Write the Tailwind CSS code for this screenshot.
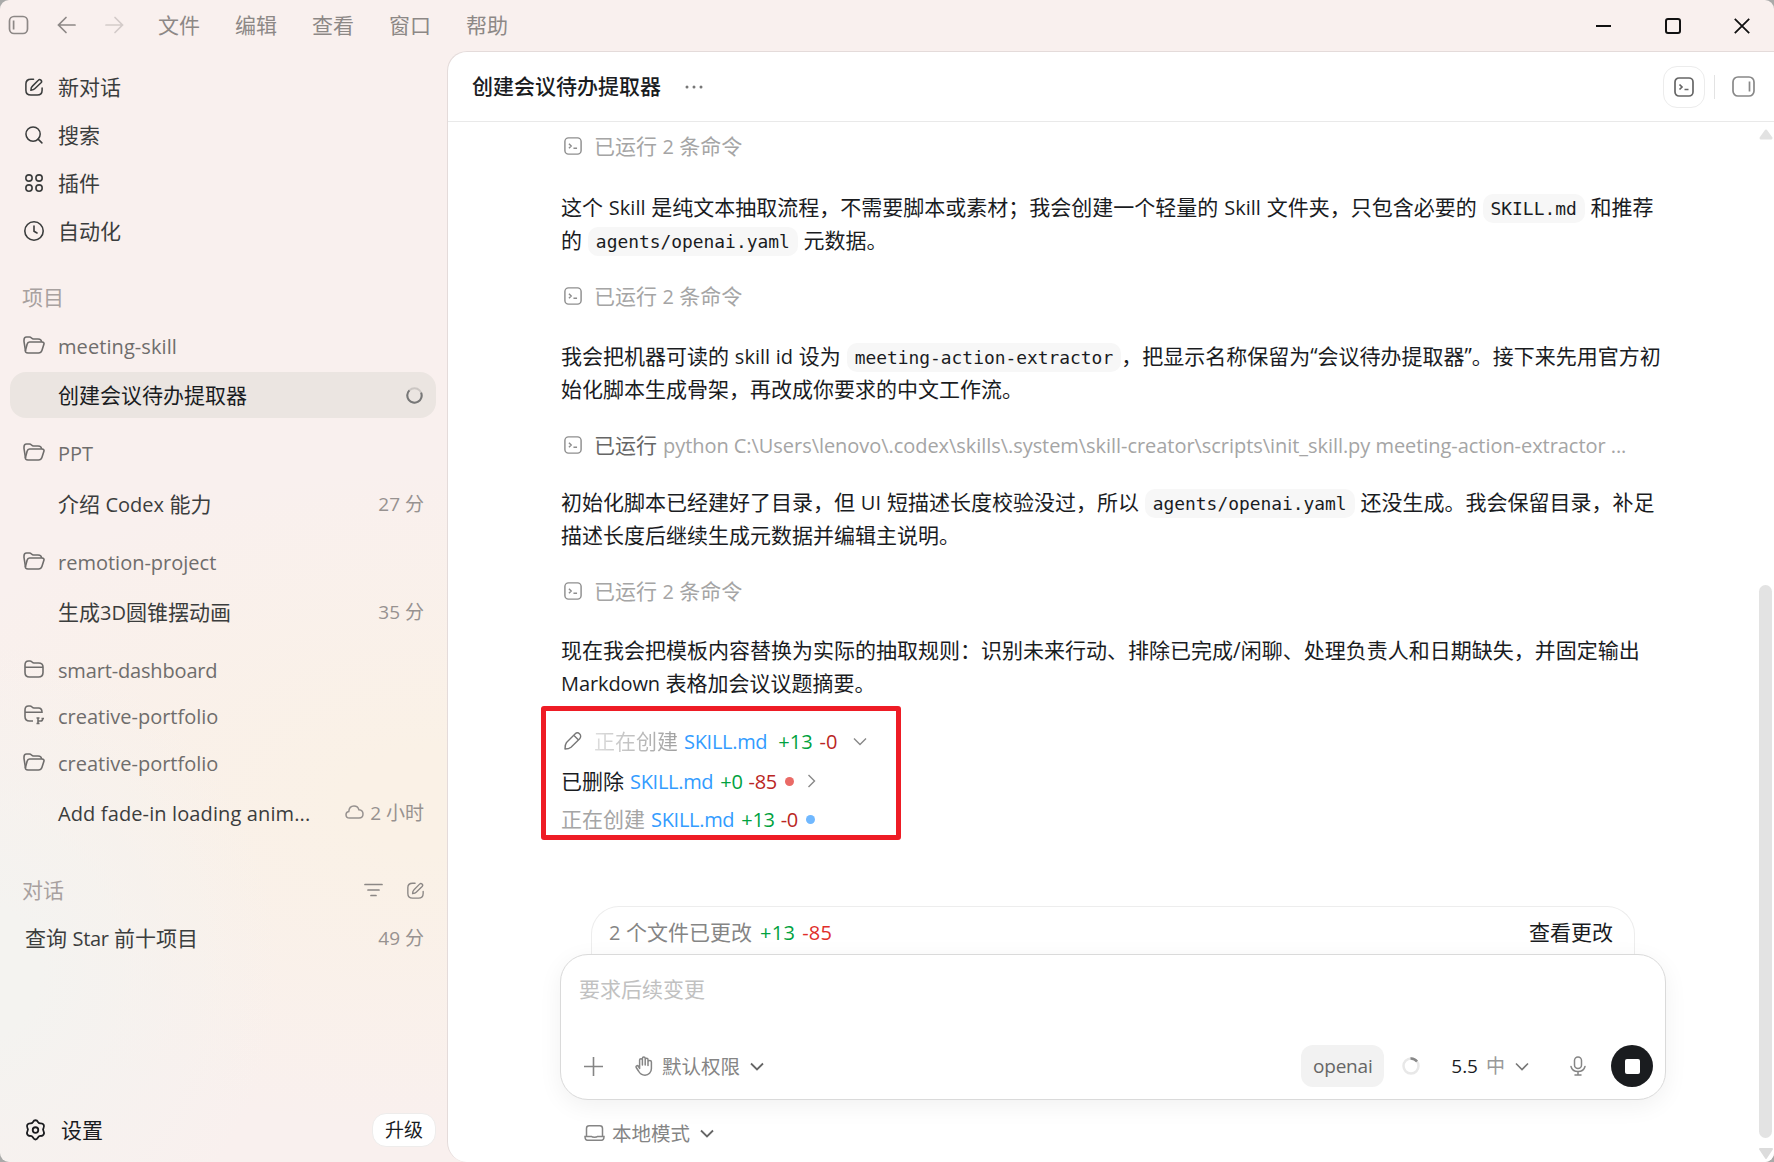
<!DOCTYPE html>
<html lang="zh-CN">
<head>
  <meta charset="UTF-8">
  <meta name="viewport" content="width=device-width, initial-scale=1.0">
  <title>创建会议待办提取器</title>
  <script src="https://cdn.jsdelivr.net/npm/@tailwindcss/browser@4"></script>
</head>
<body class="h-screen overflow-hidden bg-[#a9aaa9] font-['Open_Sans','Noto_Sans_CJK_SC',sans-serif] text-[21px] leading-[33px] text-[#1a1c1f]">

  <!-- Icon sprite -->
  <svg class="hidden">
    <symbol id="compose" viewBox="0 0 20 20"><path d="M9.500 1.500H6.600C3 1.500 1 3.400 1 6.600v7C1 17 3 19 6.600 19h7c3.400 0 5.400-2 5.400-5.400V11" stroke-linecap="round"/><path d="M8 9.300l6.800-6.800a2 2 0 0 1 3 2.800L10.800 12c-.7.700-2 1.200-4.200 1.500 0-1.900.5-3.400 1.400-4.200z"/></symbol>
    <symbol id="terminal" viewBox="0 0 20 20"><rect x="1" y="1" width="18" height="18" rx="4"/><path d="M5.500 7.500L8 10l-2.500 2.500M10.500 12.500h4"/></symbol>
    <symbol id="folder-open" viewBox="0 0 22 18"><path d="M2.500 15L1 5.500V4c0-2 1-3 2.500-3h3c2 0 2 2 4 2H15c2.500 0 3.500 1 3.500 3"/><path d="M6.500 6H19c1.700 0 2.300 1 1.900 2.300l-2 6.200c-.6 1.800-1.500 2.500-3.400 2.500H5c-2 0-3-1-2.500-2.800l1.600-6C4.500 6.700 5.200 6 6.500 6z"/></symbol>
    <symbol id="folder" viewBox="0 0 20 18"><path d="M1 5c0-2.800 1.200-4 3.500-4H6c2 0 2 2 4 2h4.500C17.500 3 19 4.300 19 7v5.500c0 3-1.500 4.500-4.500 4.500h-9C2.500 17 1 15.500 1 12.500zM1 7.300h18"/></symbol>
    <symbol id="down" viewBox="0 0 14 9"><path d="M1 1.500l6 6 6-6"/></symbol>
  </svg>

  <div class="flex h-full flex-col overflow-hidden rounded-[9px] bg-[#f9f0ee] bg-[radial-gradient(ellipse_300px_330px_at_-20px_970px,#f4f3f0_20%,transparent),radial-gradient(ellipse_560px_330px_at_433px_800px,#faf1e6_15%,transparent)]">

    <!-- Title bar -->
    <header class="flex h-[51px] shrink-0 items-center text-[#8d8886]">
      <svg class="ml-2 size-[22px]" viewBox="0 0 22 22" fill="none" stroke="currentColor" stroke-width="1.700"><rect x="1.500" y="1.500" width="18" height="17" rx="4.500"/><path d="M5.600 5.500v9"/></svg>
      <svg class="ml-[27px] size-[19px]" viewBox="0 0 19 19" fill="none" stroke="currentColor" stroke-width="1.700" stroke-linecap="round"><path d="M18 9H1.500M9 1.500L1.500 9 9 16.500"/></svg>
      <svg class="ml-[29px] size-[19px] text-[#d3cbc9]" viewBox="0 0 19 19" fill="none" stroke="currentColor" stroke-width="1.700" stroke-linecap="round"><path d="M1 9h16.500M10 1.500L17.500 9 10 16.500"/></svg>
      <nav class="ml-[34px] flex gap-[35px]">
        <span>文件</span><span>编辑</span><span>查看</span><span>窗口</span><span>帮助</span>
      </nav>
      <div class="mr-6 ml-auto flex items-center gap-[53px] text-[#111]">
        <svg class="size-4" viewBox="0 0 16 16" fill="none" stroke="currentColor" stroke-width="2"><path d="M0 8h15"/></svg>
        <svg class="size-4" viewBox="0 0 16 16" fill="none" stroke="currentColor" stroke-width="2"><rect x="1" y="1" width="14" height="14" rx="2"/></svg>
        <svg class="size-4" viewBox="0 0 16 16" fill="none" stroke="currentColor" stroke-width="1.800"><path d="M.8.800l14.400 14.400M15.200.800L.8 15.200"/></svg>
      </div>
    </header>

    <div class="flex min-h-0 flex-1">
      <!-- Sidebar -->
      <aside class="flex w-[447px] shrink-0 flex-col pt-3 text-[#3b3d3d]">
        <nav>
          <div class="flex h-12 items-center pl-[25px]">
            <svg class="size-[18px]" fill="none" stroke="currentColor" stroke-width="1.700"><use href="#compose"/></svg>
            <span class="ml-[15px]">新对话</span>
          </div>
          <div class="flex h-12 items-center pl-[25px]">
            <svg class="size-[19px]" viewBox="0 0 20 20" fill="none" stroke="currentColor" stroke-width="1.600" stroke-linecap="round"><circle cx="8.500" cy="8.500" r="7.500"/><path d="M13.800 13.800l4 4"/></svg>
            <span class="ml-[14px]">搜索</span>
          </div>
          <div class="flex h-12 items-center pl-[25px]">
            <svg class="size-[19px]" viewBox="0 0 20 20" fill="none" stroke="currentColor" stroke-width="1.700"><circle cx="4.200" cy="4.200" r="3.300"/><circle cx="14.800" cy="4.200" r="3.300"/><circle cx="4.200" cy="14.800" r="3.300"/><circle cx="14.800" cy="14.800" r="3.300"/></svg>
            <span class="ml-[14px]">插件</span>
          </div>
          <div class="flex h-12 items-center pl-[24px]">
            <svg class="size-[21px]" viewBox="0 0 21 21" fill="none" stroke="currentColor" stroke-width="1.600" stroke-linecap="round"><circle cx="10" cy="10" r="9.200"/><path d="M10 5v5.300l3 1.700"/></svg>
            <span class="ml-[13px]">自动化</span>
          </div>
        </nav>

        <!-- Projects -->
        <h2 class="mt-[26px] pl-[22px] text-[#a8a19f]">项目</h2>
        <div class="mt-[9px] flex h-[46px] items-center pl-[23px] text-[#6f6d6c]">
          <svg class="-mt-0.5 h-[18px] w-[22px]" fill="none" stroke="currentColor" stroke-width="1.600"><use href="#folder-open"/></svg>
          <span class="ml-[13px] text-[20px] tracking-[0.08px]">meeting-skill</span>
        </div>
        <div class="mt-[3px] ml-[10px] flex h-[46px] w-[426px] items-center rounded-2xl bg-[#ebe5e1] pr-[13px] pl-12 text-[#1a1c1f]">
          <span>创建会议待办提取器</span>
          <svg class="ml-auto size-[17px]" viewBox="0 0 17 17" fill="none" stroke="#777" stroke-width="2"><circle cx="8.500" cy="8.500" r="7.200" stroke="#cbc6c3"/><path d="M3.400 3.400a7.200 7.200 0 1 0 11.700 2.300"/></svg>
        </div>
        <div class="mt-3 flex h-[46px] items-center pl-[23px] text-[#6f6d6c]">
          <svg class="-mt-0.5 h-[18px] w-[22px]" fill="none" stroke="currentColor" stroke-width="1.600"><use href="#folder-open"/></svg>
          <span class="ml-[13px] text-[20px]">PPT</span>
        </div>
        <div class="mt-[5px] flex h-[46px] items-center pr-[23px] pl-[58px]">
          <span>介绍 <span class="text-[20px]">Codex</span> 能力</span>
          <span class="ml-auto text-[19px] text-[#979290]">27 分</span>
        </div>
        <div class="mt-3 flex h-[46px] items-center pl-[23px] text-[#6f6d6c]">
          <svg class="-mt-0.5 h-[18px] w-[22px]" fill="none" stroke="currentColor" stroke-width="1.600"><use href="#folder-open"/></svg>
          <span class="ml-[13px] text-[20px]">remotion-project</span>
        </div>
        <div class="mt-1 flex h-[46px] items-center pr-[23px] pl-[58px]">
          <span>生成<span class="text-[20px]">3D</span>圆锥摆动画</span>
          <span class="ml-auto text-[19px] text-[#979290]">35 分</span>
        </div>
        <div class="mt-3 flex h-[46px] items-center pl-6 text-[#6f6d6c]">
          <svg class="-mt-0.5 h-[18px] w-5" fill="none" stroke="currentColor" stroke-width="1.600"><use href="#folder"/></svg>
          <span class="ml-[14px] text-[20px] tracking-[-0.16px]">smart-dashboard</span>
        </div>
        <div class="flex h-[46px] items-center pl-6 text-[#6f6d6c]">
          <svg class="-mt-0.5 size-5" viewBox="0 0 20 20" fill="none" stroke="currentColor" stroke-width="1.600"><path d="M9 16H5.500C2.500 16 1 14.500 1 11.500V5c0-2.800 1.200-4 3.500-4H6c2 0 2 2 4 2h4.500C16.500 3 18 4 18 7.300H1"/><path d="M14 13v6M18.500 13v1.500c0 1-1 1.500-2 1.500H14M12.500 13h3M12.500 18.500h3M17.500 13.500h2.500"/></svg>
          <span class="ml-[14px] text-[20px]">creative-portfolio</span>
        </div>
        <div class="mt-px flex h-[46px] items-center pl-[23px] text-[#6f6d6c]">
          <svg class="-mt-0.5 h-[18px] w-[22px]" fill="none" stroke="currentColor" stroke-width="1.600"><use href="#folder-open"/></svg>
          <span class="ml-[13px] text-[20px]">creative-portfolio</span>
        </div>
        <div class="mt-1 flex h-[46px] items-center pr-[23px] pl-[58px]">
          <span class="text-[20px] tracking-[0.12px]">Add fade-in loading anim...</span>
          <svg class="-mt-0.5 ml-auto h-[14px] w-[19px] text-[#979290]" viewBox="0 0 19 14" fill="none" stroke="currentColor" stroke-width="1.500"><path d="M4.500 13C2.300 13 1 11.500 1 9.700 1 8 2.200 6.800 3.800 6.500 4 3.300 6 1 9 1c2.500 0 4.300 1.500 4.900 3.800C16.300 5 18 6.700 18 9c0 2.300-1.700 4-4 4z"/></svg>
          <span class="ml-[6px] text-[19px] text-[#979290]">2 小时</span>
        </div>

        <!-- Conversations -->
        <div class="mt-[31px] flex h-[46px] items-center pr-[23px] pl-[22px] text-[#a8a19f]">
          <h2>对话</h2>
          <svg class="ml-auto h-[14px] w-[19px] text-[#8b8785]" viewBox="0 0 19 14" fill="none" stroke="currentColor" stroke-width="1.700" stroke-linecap="round"><path d="M1 1.500h17M4 7h11M7 12.500h5"/></svg>
          <svg class="ml-6 size-[17px] text-[#8b8785]" fill="none" stroke="currentColor" stroke-width="1.600"><use href="#compose"/></svg>
        </div>
        <div class="mt-[2px] flex h-[46px] items-center pr-[23px] pl-[25px]">
          <span>查询 <span class="text-[20px] tracking-[-0.3px]">Star</span> 前十项目</span>
          <span class="ml-auto text-[19px] text-[#979290]">49 分</span>
        </div>

        <div class="mt-auto mb-[15px] flex items-center pl-6 text-[#1a1c1f]">
          <svg class="size-[23px]" viewBox="0 0 24 24" fill="none" stroke="currentColor" stroke-width="1.900" stroke-linejoin="round"><path d="M12 1.300c1.600 0 2.200 1 2.800 2 .6.900 1.300 1.300 2.400 1.200 1.200-.1 2.500.1 3.300 1.500.8 1.400.4 2.500-.2 3.600-.6 1-.6 1.800 0 2.800.6 1.100 1 2.300.2 3.700-.8 1.400-2 1.700-3.300 1.600-1.100-.1-1.800.3-2.400 1.300-.6 1-1.200 2.400-2.800 2.400s-2.200-1.400-2.800-2.400c-.6-1-1.300-1.400-2.400-1.300-1.300.1-2.500-.2-3.300-1.600-.8-1.400-.4-2.600.2-3.700.6-1 .6-1.800 0-2.800-.6-1.100-1-2.200-.2-3.600.8-1.400 2.100-1.600 3.300-1.500 1.100.1 1.800-.3 2.400-1.200.6-1 1.200-2 2.800-2z"/><circle cx="12" cy="11.500" r="2.900"/></svg>
          <span class="ml-[14px]">设置</span>
          <button class="mr-[11px] ml-auto h-[34px] w-16 rounded-[14px] border border-[#eeeceb] bg-white text-[19px] leading-[30px]">升级</button>
        </div>
      </aside>

      <!-- Conversation panel -->
      <main class="flex min-w-0 flex-1 flex-col rounded-l-[20px] border-t border-l border-[#e4dbda] bg-white">
        <div class="flex h-[70px] shrink-0 items-center border-b border-[#e9e9e9] pr-[19px] pl-6">
          <h1 class="font-medium">创建会议待办提取器</h1>
          <svg class="ml-6 h-1 w-[18px]" viewBox="0 0 18 4" fill="#777"><circle cx="2" cy="2" r="1.500"/><circle cx="9" cy="2" r="1.500"/><circle cx="16" cy="2" r="1.500"/></svg>
          <div class="ml-auto flex size-[42px] items-center justify-center rounded-[14px] border border-[#ececec] text-[#666]">
            <svg class="size-5" fill="none" stroke="currentColor" stroke-width="1.700"><use href="#terminal"/></svg>
          </div>
          <div class="ml-[9px] h-6 w-px bg-[#e3e3e3]"></div>
          <svg class="ml-[17px] h-[21px] w-[23px] text-[#888]" viewBox="0 0 23 21" fill="none" stroke="currentColor" stroke-width="1.700"><rect x="1" y="1" width="21" height="19" rx="5"/><path d="M17.500 5.500v10"/></svg>
        </div>

        <div class="relative min-h-0 flex-1 pl-[113px] whitespace-nowrap">
          <div class="mt-[7px] flex h-[34px] items-center pl-[3px] text-[#a5a5a5]">
            <svg class="size-[18px]" fill="none" stroke="#8e8e8e" stroke-width="1.600"><use href="#terminal"/></svg>
            <span class="ml-3">已运行 <span class="text-[20px]">2</span> 条命令</span>
          </div>
          <p class="mt-7 [word-spacing:0.4px]">这个 <span class="text-[20px]">Skill</span> 是纯文本抽取流程，不需要脚本或素材；我会创建一个轻量的 <span class="text-[20px]">Skill</span> 文件夹，只包含必要的 <code class="rounded-[10px] bg-[#f7f7f7] px-2 py-1 font-['DejaVu_Sans_Mono',monospace] text-[17.900px] leading-none">SKILL.md</code> 和推荐<br>的 <code class="rounded-[10px] bg-[#f7f7f7] px-2 py-1 font-['DejaVu_Sans_Mono',monospace] text-[17.900px] leading-none">agents/openai.yaml</code> 元数据。</p>
          <div class="mt-[22px] flex h-[34px] items-center pl-[3px] text-[#a5a5a5]">
            <svg class="size-[18px]" fill="none" stroke="#8e8e8e" stroke-width="1.600"><use href="#terminal"/></svg>
            <span class="ml-3">已运行 <span class="text-[20px]">2</span> 条命令</span>
          </div>
          <p class="mt-[27px] [word-spacing:0.4px]">我会把机器可读的 <span class="text-[20px]">skill id</span> 设为 <code class="rounded-[10px] bg-[#f7f7f7] px-2 py-1 font-['DejaVu_Sans_Mono',monospace] text-[17.900px] leading-none">meeting-action-extractor</code>，把显示名称保留为“会议待办提取器”。接下来先用官方初<br>始化脚本生成骨架，再改成你要求的中文工作流。</p>
          <div class="mt-[22px] flex h-[34px] items-center pl-[3px] text-[#a5a5a5]">
            <svg class="size-[18px]" fill="none" stroke="#8e8e8e" stroke-width="1.600"><use href="#terminal"/></svg>
            <span class="ml-3 text-[#666]">已运行</span>
            <span class="ml-[6px] text-[20px] tracking-[-0.05px]">python C:\Users\lenovo\.codex\skills\.system\skill-creator\scripts\init_skill.py meeting-action-extractor ...</span>
          </div>
          <p class="mt-6 [word-spacing:0.4px]">初始化脚本已经建好了目录，但 <span class="text-[20px]">UI</span> 短描述长度校验没过，所以 <code class="rounded-[10px] bg-[#f7f7f7] px-2 py-1 font-['DejaVu_Sans_Mono',monospace] text-[17.900px] leading-none">agents/openai.yaml</code> 还没生成。我会保留目录，补足<br>描述长度后继续生成元数据并编辑主说明。</p>
          <div class="mt-[22px] flex h-[34px] items-center pl-[3px] text-[#a5a5a5]">
            <svg class="size-[18px]" fill="none" stroke="#8e8e8e" stroke-width="1.600"><use href="#terminal"/></svg>
            <span class="ml-3">已运行 <span class="text-[20px]">2</span> 条命令</span>
          </div>
          <p class="mt-[26px]">现在我会把模板内容替换为实际的抽取规则：识别未来行动、排除已完成/闲聊、处理负责人和日期缺失，并固定输出<br><span class="text-[20px] tracking-[-0.1px]">Markdown</span> 表格加会议议题摘要。</p>

          <!-- File edits, framed in red -->
          <div class="mt-[6px] ml-[-20px] h-[134px] w-[360px] rounded-[3px] border-[5px] border-[#ee1c25] pl-[15px]">
            <div class="mt-[13px] flex h-[34px] items-center pl-[3px]">
              <svg class="size-[18px] text-[#777]" viewBox="0 0 18 18" fill="none" stroke="currentColor" stroke-width="1.400" stroke-linejoin="round"><path d="M2.500 10.500L11 2a3.200 3.200 0 0 1 4.700 4.700L7 15.300C5.500 16.500 3 17 1 17c0-2 .3-5 1.500-6.500zM10 3.500l4.500 4.500"/></svg>
              <span class="ml-3 bg-linear-to-r from-[#dedede] to-[#9f9f9f] bg-clip-text text-transparent">正在创建</span>
              <span class="ml-[6px] text-[20px] tracking-[-0.3px] text-[#339cff]">SKILL.md</span>
              <span class="ml-[11px] text-[20px] text-[#00a240]">+13</span>
              <span class="ml-[7px] text-[20px] text-[#ba2623]">-0</span>
              <svg class="ml-[16px] h-[9px] w-[14px]" fill="none" stroke="#888" stroke-width="1.400"><use href="#down"/></svg>
            </div>
            <div class="mt-[6px] flex h-[34px] items-center">
              <span>已删除</span>
              <span class="ml-[6px] text-[20px] tracking-[-0.3px] text-[#339cff]">SKILL.md</span>
              <span class="ml-[7px] text-[20px] tracking-[-0.3px] text-[#00a240]">+0</span>
              <span class="ml-[6px] text-[20px] tracking-[-0.3px] text-[#ba2623]">-85</span>
              <span class="ml-2 size-[9px] rounded-full bg-[#ea6a66]"></span>
              <svg class="ml-[13px] h-[14px] w-[9px]" viewBox="0 0 9 14" fill="none" stroke="#888" stroke-width="1.400"><path d="M1.500 1l6 6-6 6"/></svg>
            </div>
            <div class="mt-1 flex h-[34px] items-center">
              <span class="text-[#a5a5a5]">正在创建</span>
              <span class="ml-[6px] text-[20px] tracking-[-0.3px] text-[#339cff]">SKILL.md</span>
              <span class="ml-[7px] text-[20px] tracking-[-0.3px] text-[#00a240]">+13</span>
              <span class="ml-[6px] text-[20px] tracking-[-0.3px] text-[#ba2623]">-0</span>
              <span class="ml-2 size-[9px] rounded-full bg-[#70b8ff]"></span>
            </div>
          </div>

          <!-- Composer -->
          <div class="mt-[66px] ml-[30px] flex h-12 w-[1044px] items-start rounded-t-[28px] border border-b-0 border-[#ededed] pt-[9px] pr-[21px] pl-[17px]">
            <span class="text-[#858585]"><span class="text-[20px]">2</span> 个文件已更改</span>
            <span class="ml-2 text-[20px] tracking-[0.3px] text-[#00a240]">+13</span>
            <span class="ml-[7px] text-[20px] tracking-[0.3px] text-[#e02e2a]">-85</span>
            <span class="ml-auto">查看更改</span>
          </div>
          <div class="relative ml-[-1px] flex h-[146px] w-[1106px] flex-col justify-between rounded-[28px] border border-[#dadada] bg-white pt-[18px] pr-3 pb-3 pl-[18px] shadow-[0_6px_24px_rgba(0,0,0,0.06)]">
            <div class="text-[#c1c1c1]">要求后续变更</div>
            <div class="flex h-[42px] items-center text-[#858585]">
              <svg class="ml-[5px] size-[19px]" viewBox="0 0 19 19" fill="none" stroke="currentColor" stroke-width="1.600"><path d="M9.500 0v19M0 9.500h19"/></svg>
              <svg class="ml-8 h-5 w-[18px]" viewBox="0 0 18 20" fill="none" stroke="currentColor" stroke-width="1.500" stroke-linecap="round" stroke-linejoin="round"><path d="M4.600 12.500V4c0-1.800 2.800-1.800 2.800 0v5M7.400 4V2.400c0-1.800 2.800-1.800 2.800 0V9M10.200 3.600c0-1.800 2.800-1.800 2.800 0V9.500M13 5.800c0-1.800 3.400-1.800 3.400.2v6.500c0 4-2.800 6.700-6.400 6.700-3.500 0-5.200-1.700-6.500-4.200L1.200 11.500c-.8-1.600 1.200-2.500 2.200-1.200l1.200 2.200"/></svg>
              <span class="ml-[9px] text-[19.500px]">默认权限</span>
              <svg class="ml-[10px] h-[9px] w-[14px]" fill="none" stroke="#666" stroke-width="1.800"><use href="#down"/></svg>
              <span class="ml-auto flex h-[42px] w-[83px] items-center justify-center rounded-xl bg-[#f2f2f2] text-[19px] tracking-[-0.2px] text-[#666]">openai</span>
              <svg class="ml-[18px] size-[18px]" viewBox="0 0 18 18" fill="none" stroke="#e8e8e8" stroke-width="2.500"><circle cx="9" cy="9" r="7.500"/><path d="M8.500 1.500a7.500 7.500 0 0 1 6.500 3" stroke="#888"/></svg>
              <span class="ml-[31px] text-[19px] text-[#1a1c1f]">5.5</span>
              <span class="ml-2 text-[19px] text-[#999]">中</span>
              <svg class="ml-[10px] h-[9px] w-[14px]" fill="none" stroke="#777" stroke-width="1.600"><use href="#down"/></svg>
              <svg class="ml-[41px] h-5 w-4" viewBox="0 0 16 20" fill="none" stroke="currentColor" stroke-width="1.500" stroke-linecap="round"><rect x="4.500" y="1" width="7" height="11.500" rx="3.500"/><path d="M1 10.500c.8 3.200 3.500 5 7 5s6.200-1.800 7-5M8 15.500V19M5 19h6"/></svg>
              <span class="ml-[25px] flex size-[42px] items-center justify-center rounded-full bg-[#1a1c1f]"><span class="size-[15px] rounded-[2px] bg-white"></span></span>
            </div>
          </div>
          <div class="mt-4 ml-[23px] flex h-[34px] items-center text-[#858585]">
            <svg class="h-4 w-[21px]" viewBox="0 0 21 16" fill="none" stroke="currentColor" stroke-width="1.500"><path d="M2.500 11.500v-8c0-2 1-2.700 2.700-2.700h10.600c1.700 0 2.700.7 2.700 2.700v8"/><path d="M1 11.500h6.500c.8 1 5.200 1 6 0H20c0 2.500-.8 3.700-2.500 3.700h-14C1.800 15.200 1 14 1 11.500z"/></svg>
            <span class="ml-[7px] text-[19.500px]">本地模式</span>
            <svg class="ml-[10px] h-[9px] w-[14px]" fill="none" stroke="#666" stroke-width="1.800"><use href="#down"/></svg>
          </div>

          <!-- Scrollbar -->
          <div class="absolute inset-y-0 right-[2px] flex w-[13px] flex-col items-center pt-[7px] pb-[3px]">
            <svg class="h-[11px] w-[14px]" viewBox="0 0 14 11" fill="#e2e2e2" stroke="#e2e2e2" stroke-width="3" stroke-linejoin="round"><path d="M7 2l5 7H2z"/></svg>
            <div class="mt-auto mb-[10px] h-[553px] w-full rounded-full bg-[#e3e3e3]"></div>
            <svg class="h-[11px] w-[14px]" viewBox="0 0 14 11" fill="#dcdcdc" stroke="#dcdcdc" stroke-width="2" stroke-linejoin="round"><path d="M1 1h12L7 10z"/></svg>
          </div>
        </div>
      </main>
    </div>
  </div>
</body>
</html>
